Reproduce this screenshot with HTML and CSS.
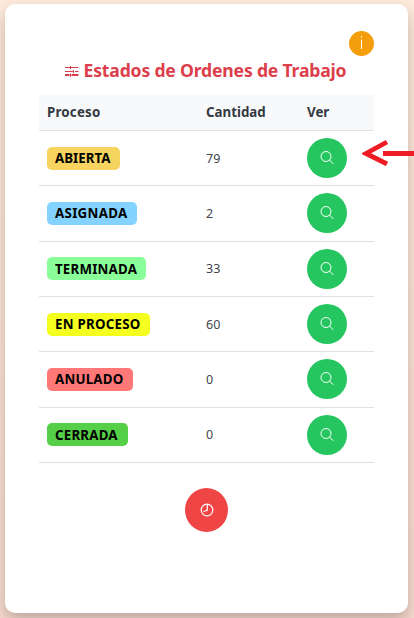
FILE: index.html
```html
<!DOCTYPE html>
<html lang="es">
<head>
<meta charset="utf-8">
<title>Estados de Ordenes de Trabajo</title>
<link rel="stylesheet" href="styles.css">
</head>
<body>
<svg class="symbols" aria-hidden="true">
  <symbol id="search" viewBox="0 0 14 14"><circle cx="6" cy="5.5" r="5"/><path d="M9.5 9 13.3 12.8"/></symbol>
</svg>
<main class="card">
  <div class="toolbar"><button class="info" aria-label="Información"><svg viewBox="0 0 25 25"><path d="M12.5 5v1.5M12.5 8.5V18"/></svg></button></div>
  <h1 class="title">
    <svg class="sliders" viewBox="0 0 14 12"><path d="M0 2.5h5M6 2.5h7.500M0 6.500h8M10 6.500h3.500"/><path d="M5.500 1v3M8.500 5v3M5.500 8.500v3.500"/><path class="thick" d="M0 10h4.500M6.500 10h7"/></svg>
    <span>Estados de Ordenes de Trabajo</span>
  </h1>
  <table class="table">
    <thead><tr><th class="c-name">Proceso</th><th class="c-count">Cantidad</th><th>Ver</th></tr></thead>
    <tbody>
      <tr><td><span class="badge abierta">ABIERTA</span></td><td>79</td><td><button class="view"><svg><use href="#search"/></svg></button></td></tr>
      <tr><td><span class="badge asignada">ASIGNADA</span></td><td>2</td><td><button class="view"><svg><use href="#search"/></svg></button></td></tr>
      <tr><td><span class="badge terminada">TERMINADA</span></td><td>33</td><td><button class="view"><svg><use href="#search"/></svg></button></td></tr>
      <tr><td><span class="badge proceso">EN PROCESO</span></td><td>60</td><td><button class="view"><svg><use href="#search"/></svg></button></td></tr>
      <tr><td><span class="badge anulado">ANULADO</span></td><td>0</td><td><button class="view"><svg><use href="#search"/></svg></button></td></tr>
      <tr><td><span class="badge cerrada">CERRADA</span></td><td>0</td><td><button class="view"><svg><use href="#search"/></svg></button></td></tr>
    </tbody>
  </table>
  <div class="footer"><button class="history" aria-label="Historial"><svg viewBox="0 0 14 14"><circle cx="7" cy="7" r="5.8"/><path d="M7.3 1v6.4L3.5 8.5"/></svg></button></div>
</main>
<svg class="arrow" viewBox="0 0 52 28"><path d="M52 15.5H21M25 4 4 15.500 25 26"/></svg>
</body>
</html>
```
FILE: styles.css
```css
* { box-sizing: border-box; }
body {
  margin: 0;
  height: 618px;
  padding: 4px 6px 5px 5px;
  overflow: hidden;
  position: relative;
  background: linear-gradient(#fdeadb, #fee6d8 40%, #fadcd0);
  font-family: "Noto Sans", "Open Sans", sans-serif;
  color: #40464c;
}
.symbols { position: absolute; width: 0; height: 0; }
.card {
  height: 609px;
  padding: 27px 34px 0;
  background: #fff;
  border-radius: 10px;
  box-shadow: 0 8px 16px rgba(0, 0, 0, .24);
}
button { border: 0; padding: 0; display: flex; align-items: center; justify-content: center; border-radius: 50%; }
svg { fill: none; stroke: #fff; stroke-width: 1; }
.toolbar { display: flex; justify-content: flex-end; }
.info { width: 25px; height: 25px; background: #f59e0b; }
.info svg { width: 25px; height: 25px; }
.title {
  display: flex;
  align-items: center;
  justify-content: center;
  gap: 5px;
  height: 30px;
  margin: 0 2px 9px 0;
  font-size: 17.6px;
  font-weight: 700;
  color: #dc3f4b;
  white-space: nowrap;
}
.title span { letter-spacing: -.19px; padding-bottom: 2px; }
.sliders { width: 14px; height: 12px; stroke: #dc3f4b; flex: none; }
.thick { stroke-width: 2; }
.table { width: 335px; table-layout: fixed; border-collapse: separate; border-spacing: 0; }
th {
  height: 36px;
  padding: 0 8px 2px;
  text-align: left;
  font-size: 13.3px;
  color: #343a42;
  background: #f8f9fb;
  border-bottom: 1px solid #dee2e6;
}
th:first-child { letter-spacing: .2px; }
.c-name { width: 159px; }
.c-count { width: 101px; }
td { height: 55.33px; padding: 0 8px; font-size: 12.5px; border-bottom: 1px solid #dee0e4; vertical-align: middle; }
.badge {
  display: flex;
  align-items: center;
  padding-left: 8px;
  height: 23px;
  border-radius: 5px;
  font-size: 13.3px;
  font-weight: 700;
  letter-spacing: .2px;
  color: #000;
  white-space: nowrap;
}
.abierta { width: 73px; background: #f7d45f; letter-spacing: 0; }
.asignada { width: 90px; background: #83d2ff; letter-spacing: .3px; }
.terminada { width: 99px; background: #8aff99; }
.proceso { width: 103px; background: #f4ff1f; letter-spacing: .25px; }
.anulado { width: 86px; background: #ff7878; }
.cerrada { width: 81px; background: #54cf47; }
.view { width: 40px; height: 40px; background: #25c660; }
.view svg { width: 14px; height: 14px; }
.footer { display: flex; justify-content: center; padding-top: 25px; }
.history { width: 43px; height: 44px; background: #ef4545; }
.history svg { width: 14px; height: 14px; stroke-width: 1.2; }
.arrow { position: absolute; left: 362px; top: 138px; width: 52px; height: 28px; stroke: #ee1c24; stroke-width: 4.8; }
```
